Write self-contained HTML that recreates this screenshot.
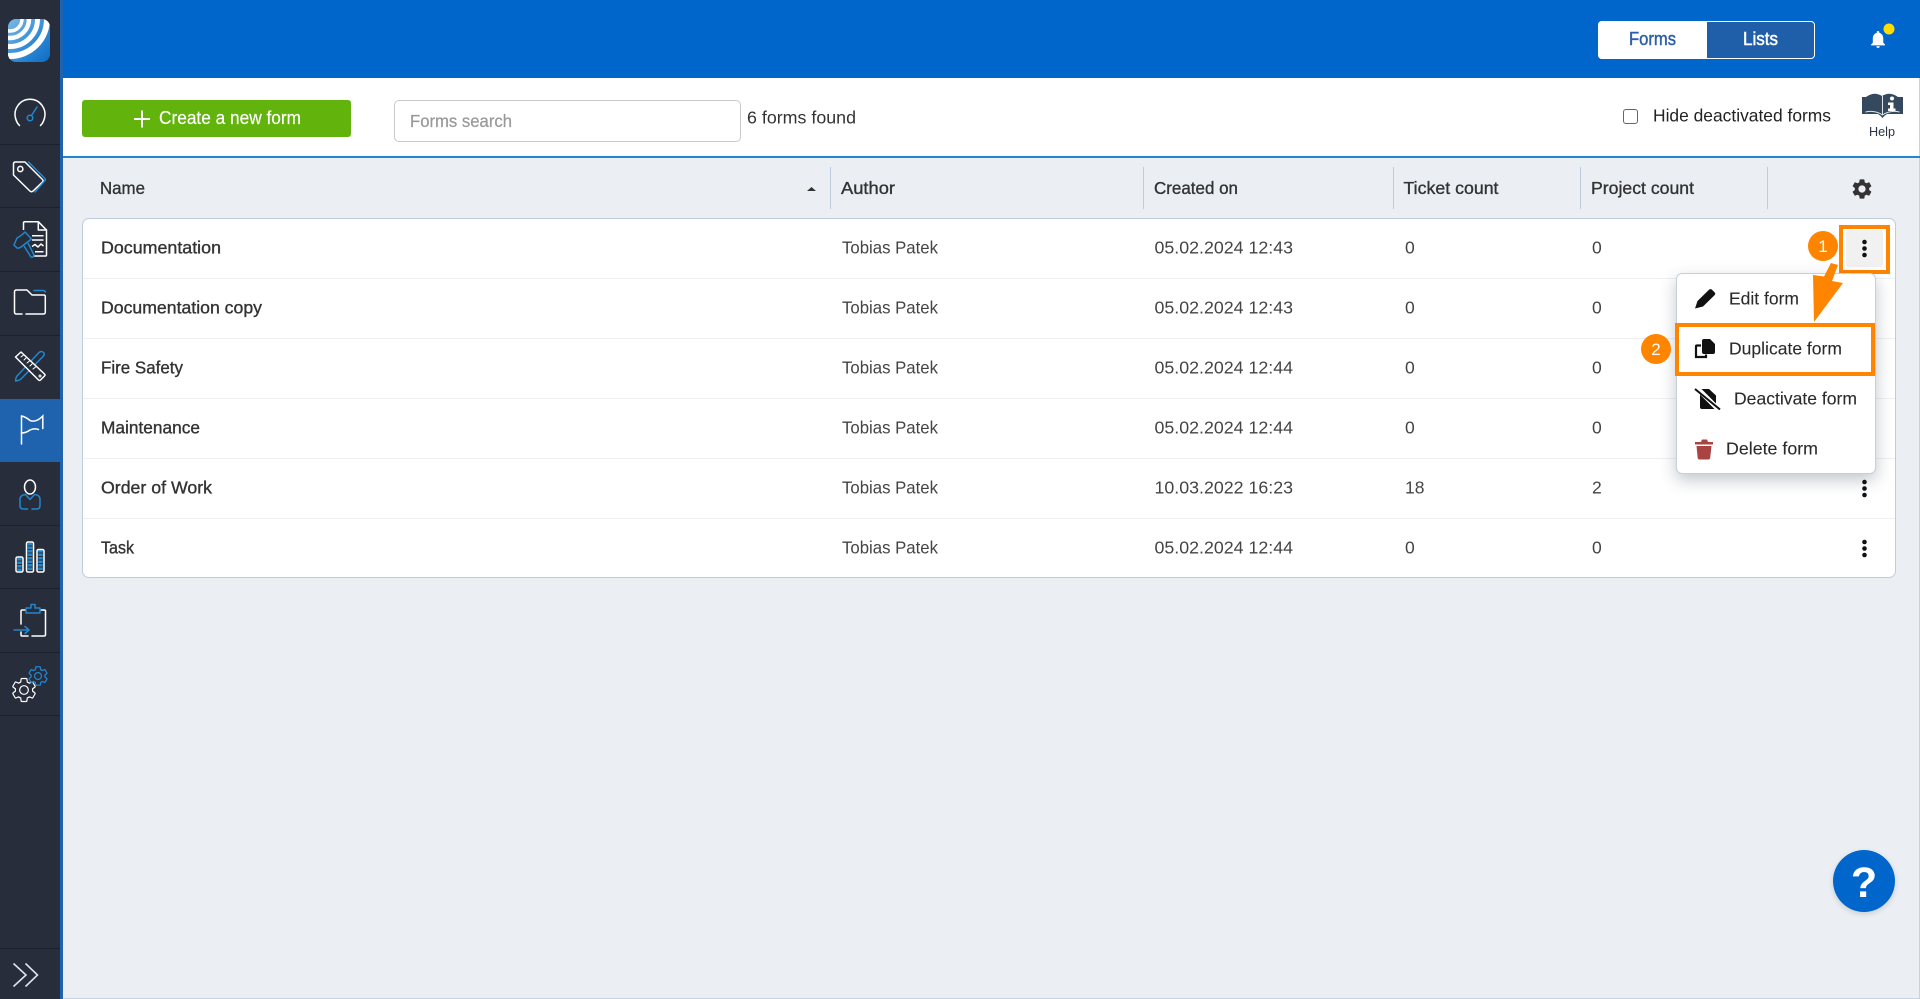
<!DOCTYPE html>
<html lang="en"><head><meta charset="utf-8"><title>Forms</title>
<style>
html,body{margin:0;padding:0;width:1920px;height:999px;overflow:hidden;background:#ebeff4}
div{position:absolute;box-sizing:border-box}
svg{position:absolute;left:0;top:0}
text{font-family:"Liberation Sans",sans-serif;font-size:17.5px;fill:#333}
.b{stroke:#333;stroke-width:.35}
.r{fill:#444}
.m{fill:#2b2b2b;stroke:#2b2b2b;stroke-width:.1}
</style></head><body>
<div style="left:0;top:0;width:60px;height:999px;background:#272d3a"></div>
<div style="left:0;top:399px;width:60px;height:63px;background:#1f62ae"></div>
<div style="left:60px;top:0;width:3px;height:999px;background:#1f62ae"></div>
<div style="left:63px;top:0;width:1857px;height:78px;background:#0066cc"></div>
<div style="left:63px;top:78px;width:1857px;height:78px;background:#fff;border-right:1px solid #c8d3df"></div>
<div style="left:63px;top:156px;width:1857px;height:2px;background:#2187cf"></div>
<div style="left:63px;top:998px;width:1857px;height:1px;background:#c8d3df"></div>
<div style="left:1919px;top:158px;width:1px;height:841px;background:#c8d3df"></div>

<div style="left:82px;top:100px;width:269px;height:37px;background:#62b40c;border-radius:3px"></div>
<div style="left:394px;top:100px;width:347px;height:42px;background:#fff;border:1px solid #c9c9c9;border-radius:5px"></div>
<div style="left:1598px;top:21px;width:217px;height:38px;background:#1f5faa;border:1.5px solid #fff;border-radius:4px"></div>
<div style="left:1598px;top:21px;width:109px;height:38px;background:#fff;border-radius:4px 0 0 4px"></div>
<div style="left:1623px;top:109px;width:15px;height:15px;background:#fff;border:1.5px solid #666;border-radius:3px"></div>

<div style="left:81.5px;top:218px;width:1814.5px;height:360px;background:#fff;border:1px solid #bfccdc;border-radius:7px"></div>
<div style="left:83px;top:278px;width:1812px;height:1px;background:#eef0f3"></div>
<div style="left:83px;top:338px;width:1812px;height:1px;background:#eef0f3"></div>
<div style="left:83px;top:398px;width:1812px;height:1px;background:#eef0f3"></div>
<div style="left:83px;top:458px;width:1812px;height:1px;background:#eef0f3"></div>
<div style="left:83px;top:518px;width:1812px;height:1px;background:#eef0f3"></div>
<div style="left:830px;top:167px;width:1px;height:42px;background:#bfccdc"></div>
<div style="left:1143px;top:167px;width:1px;height:42px;background:#bfccdc"></div>
<div style="left:1393px;top:167px;width:1px;height:42px;background:#bfccdc"></div>
<div style="left:1580px;top:167px;width:1px;height:42px;background:#bfccdc"></div>
<div style="left:1767px;top:167px;width:1px;height:42px;background:#bfccdc"></div>

<div style="left:1846px;top:230px;width:37px;height:37px;background:#f1f1f1;border-radius:3px"></div>
<div style="left:1839px;top:225px;width:51px;height:49px;border:4px solid #ff8500"></div>
<div style="left:1676px;top:273px;width:200px;height:201px;background:#fff;border:1px solid #c5d0dd;border-radius:6px;box-shadow:0 6px 16px rgba(40,50,70,.28)"></div>
<div style="left:1675px;top:323px;width:200px;height:53px;border:4px solid #ff8500"></div>
<div style="left:1833px;top:850px;width:62px;height:62px;border-radius:50%;background:#0066cc;box-shadow:0 2px 6px rgba(0,0,0,.15)"></div>

<svg width="1920" height="999" viewBox="0 0 1920 999" xmlns="http://www.w3.org/2000/svg">
<defs>
<clipPath id="lg"><rect x="8" y="19" width="42" height="43" rx="8"/></clipPath>
<linearGradient id="lb" x1="0" y1="0" x2="1" y2="1"><stop offset="0" stop-color="#7fbae6"/><stop offset=".55" stop-color="#2f8bd6"/><stop offset="1" stop-color="#0d6cc4"/></linearGradient>
</defs>
<!-- sidebar separators -->
<path stroke="#1d222c" stroke-width="1" d="M0 144.5H60M0 207.5H60M0 271.5H60M0 335.5H60M0 525.5H60M0 588.5H60M0 652.5H60M0 715.5H60M0 948.5H60"/>
<!-- logo -->
<g clip-path="url(#lg)">
<rect x="8" y="19" width="42" height="43" fill="url(#lb)"/>
<g fill="none" stroke="#fff">
<circle cx="10" cy="19" r="12" stroke-width="3.5"/>
<circle cx="10" cy="19" r="19" stroke-width="4.5"/>
<circle cx="10" cy="19" r="27.5" stroke-width="5"/>
<circle cx="10" cy="19" r="37" stroke-width="6"/>
</g>
</g>
<!-- gauge -->
<g fill="none" stroke-width="1.5" stroke-linecap="round">
<path d="M19.5 125.5l-1.5-1.8M15.6 118.5A15 15 0 1 1 44.4 118.5M40.5 125.5l1.5-1.8" stroke="#fff"/>
<path d="M15.6 118.5Q16.3 121 17.7 123.5M44.4 118.5Q43.7 121 42.3 123.5" stroke="#fff"/>
<circle cx="30" cy="118" r="2.8" stroke="#2187cf"/>
<path d="M31.5 115.5L37 107" stroke="#2187cf"/>
</g>
<!-- tag -->
<g fill="none" stroke-width="1.5" stroke-linejoin="round" stroke-linecap="round">
<path d="M13.5 164q0-2 2-2H25l17.5 17.5q1.3 1.3 0 2.6l-9.5 9q-1.5 1.3-3 0L13.5 175z" stroke="#fff"/>
<circle cx="20.3" cy="169" r="2.6" stroke="#fff"/>
<path d="M28.5 162L45 178.5q.8 1 0 2L35 192" stroke="#2187cf"/>
</g>
<!-- report with hammer -->
<g fill="none" stroke-width="1.5" stroke-linejoin="round">
<path d="M23.5 230v-7q0-1.300 1.300-1.300H38.300L46.500 230V255q0 1-1 1H33" stroke="#fff"/>
<path d="M38.300 222v8H46.500M32 235.700h11.500M32 240h11.500M35 251.700h8.500" stroke="#fff"/>
<path d="M32 246.500l3-2 3 2.500 3-3 2.500 2" stroke="#fff"/>
<path d="M14 245L17 248Q19 248.500 21 247L31.500 239L25 232Q21 236 17 238Z" stroke="#2187cf" fill="#272d3a"/>
<path d="M24 246L31 257Q33 258 34 255L28 243" stroke="#2187cf"/>
</g>
<!-- folder -->
<g fill="none" stroke-width="1.5" stroke-linecap="round" stroke-linejoin="round">
<path d="M22 314h-5.500q-2 0-2-2v-20q0-2 2-2H27l5 5h12q1.300 0 1.300 1.500V312q0 2-2 2H26" stroke="#fff"/>
<path d="M34 290.500h9q2 0 2.500 1.500" stroke="#2187cf"/>
</g>
<!-- ruler & pencil -->
<g fill="none" stroke-width="1.5" stroke-linejoin="round" stroke-linecap="round">
<path d="M43.500 352.500q1.500 1.500 0 3.500L21 379q-1 1-3 1.500l-2.500.5.500-3q.3-1.500 1.500-2.500L39 352.500q2.500-2 4.500 0z" stroke="#2187cf"/>
<path d="M21 352l-5.500 5 23 23q1 1 2 0l4-4q1-1 0-2z" stroke="#fff" fill="#272d3a"/>
<path d="M21 357l2.500-2M24 360l2-2M27 363l2.500-2M30 366l2-2M33 369l2.500-2" stroke="#fff" stroke-width="1"/>
<circle cx="40" cy="376" r="1" stroke="#fff" stroke-width="1"/>
</g>
<!-- flag -->
<g fill="none" stroke="#fff" stroke-width="1.500" stroke-linecap="round">
<path d="M21.500 416v28"/>
<path d="M21.500 416Q26 417 30 420.500Q36 423 42.800 416V428.500"/>
<path d="M38.500 429.500Q34 428 30 430Q26 433 21.500 433"/>
</g>
<!-- person -->
<g fill="none" stroke-width="1.500" stroke-linecap="round" stroke-linejoin="round">
<ellipse cx="30" cy="487" rx="5.500" ry="7" stroke="#fff"/>
<path d="M25.500 494.500Q20 495 20 499.500V505.500Q20 509 23.500 509H27.500M32 509H36.500Q40 509 40 505.500V499.500Q40 495 34.500 494.500L30 499.500L25.500 494.500" stroke="#2187cf"/>
</g>
<!-- bars -->
<g stroke="#2187cf" stroke-width="4.500" fill="none" stroke-dasharray="2.500 1">
<path d="M19.500 558v13M30 543v28M40.500 550v21"/>
</g>
<g fill="none" stroke="#fff" stroke-width="1.500">
<rect x="16" y="557" width="7" height="15" rx="1.500"/>
<rect x="26.500" y="542" width="7" height="30" rx="1.500"/>
<rect x="37" y="549.500" width="7" height="22.500" rx="1.500"/>
</g>
<!-- clipboard -->
<g fill="none" stroke-width="1.500" stroke-linecap="round" stroke-linejoin="round">
<path d="M25 610h-3q-1 0-1 1v13M21 632v3q0 1 1 1h6M32 636h12q1.500 0 1.500-1.500V611q0-1-1-1H41" stroke="#fff"/>
<path d="M26 613v-5h5v-3.500h4v3.500h5v5z" stroke="#2187cf"/>
<path d="M14 630h15M25 626.500l4 3.500-4 3.500" stroke="#2187cf"/>
</g>
<!-- gears -->
<g fill="none" fill-rule="evenodd" stroke-linejoin="round">
<path transform="translate(9.600 675.600) scale(1.200)" stroke="#fff" stroke-width="1" d="M19.140 12.940c.04-.3.06-.61.06-.94 0-.32-.02-.64-.07-.94l2.030-1.580c.18-.14.23-.41.12-.61l-1.920-3.320c-.12-.22-.37-.29-.59-.22l-2.390.96c-.5-.38-1.030-.7-1.620-.94l-.36-2.540c-.04-.24-.24-.41-.48-.41h-3.840c-.24 0-.43.17-.47.41l-.36 2.540c-.59.24-1.130.57-1.620.94l-2.390-.96c-.22-.08-.47 0-.59.22L2.740 8.870c-.12.21-.08.47.12.61l2.030 1.580c-.05.3-.09.63-.09.94s.02.64.07.94l-2.030 1.580c-.18.14-.23.41-.12.61l1.920 3.320c.12.22.37.29.59.22l2.390-.96c.5.38 1.030.7 1.620.94l.36 2.540c.05.24.24.41.48.41h3.840c.24 0 .44-.17.47-.41l.36-2.540c.59-.24 1.130-.56 1.620-.94l2.390.96c.22.08.47 0 .59-.22l1.920-3.320c.12-.22.07-.47-.12-.61l-2.010-1.580zM12 15.600c-1.980 0-3.600-1.620-3.600-3.600s1.620-3.600 3.600-3.600 3.600 1.620 3.600 3.600-1.620 3.600-3.600 3.600z"/>
<path transform="translate(26.500 664.500) scale(.96)" stroke="#2187cf" stroke-width="1.300" d="M19.140 12.940c.04-.3.06-.61.06-.94 0-.32-.02-.64-.07-.94l2.030-1.580c.18-.14.23-.41.12-.61l-1.920-3.320c-.12-.22-.37-.29-.59-.22l-2.390.96c-.5-.38-1.030-.7-1.620-.94l-.36-2.540c-.04-.24-.24-.41-.48-.41h-3.840c-.24 0-.43.17-.47.41l-.36 2.540c-.59.24-1.130.57-1.620.94l-2.390-.96c-.22-.08-.47 0-.59.22L2.740 8.870c-.12.21-.08.47.12.61l2.030 1.580c-.05.3-.09.63-.09.94s.02.64.07.94l-2.030 1.580c-.18.14-.23.41-.12.61l1.920 3.320c.12.22.37.29.59.22l2.390-.96c.5.38 1.030.7 1.620.94l.36 2.540c.05.24.24.41.48.41h3.840c.24 0 .44-.17.47-.41l.36-2.540c.59-.24 1.130-.56 1.620-.94l2.390.96c.22.08.47 0 .59-.22l1.920-3.320c.12-.22.07-.47-.12-.61l-2.010-1.580zM12 15.600c-1.980 0-3.600-1.620-3.600-3.600s1.620-3.600 3.600-3.600 3.600 1.620 3.600 3.600-1.620 3.600-3.600 3.600z"/>
</g>
<!-- chevrons -->
<path d="M13.500 963.500L26 975 13.500 986.500M25.500 963.500L37.500 975 25.500 986.500" fill="none" stroke="#e0e3e8" stroke-width="1.600"/>

<!-- toolbar -->
<path d="M142 110.500v17M134 119h16" stroke="#fff" stroke-width="2" fill="none"/>
<text x="159" y="124" textLength="142" lengthAdjust="spacingAndGlyphs" style="fill:#fff;font-size:18px;stroke:#fff;stroke-width:.15">Create a new form</text>
<text x="410" y="127" textLength="102" lengthAdjust="spacingAndGlyphs" style="fill:#999;stroke:#999;stroke-width:.25">Forms search</text>
<text x="747" y="123.500" textLength="109" lengthAdjust="spacingAndGlyphs" style="fill:#333">6 forms found</text>
<text x="1629" y="45" textLength="47" lengthAdjust="spacingAndGlyphs" style="fill:#2d5ea8;stroke:#2d5ea8;stroke-width:.45;font-size:18px">Forms</text>
<text x="1743" y="45" textLength="35" lengthAdjust="spacingAndGlyphs" style="fill:#fff;stroke:#fff;stroke-width:.45;font-size:18px">Lists</text>
<path transform="translate(1867.600 28.800) scale(.87)" fill="#fff" d="M12 22c1.100 0 2-.9 2-2h-4c0 1.100.9 2 2 2zm6-6v-5c0-3.070-1.630-5.640-4.500-6.320V4c0-.83-.67-1.500-1.500-1.500s-1.500.67-1.500 1.500v.68C7.640 5.360 6 7.920 6 11v5l-2 2v1h16v-1l-2-2z"/>
<circle cx="1889" cy="29" r="5.500" fill="#ffdc00"/>
<text x="1653" y="121.500" textLength="178" lengthAdjust="spacingAndGlyphs" style="fill:#222">Hide deactivated forms</text>
<!-- help book -->
<path fill="#34495e" d="M1862 97H1866Q1874 91 1882 96Q1890 91 1898 97H1903V114H1887Q1884 116 1882.500 118Q1881 116 1878 114H1862Z"/>
<path fill="none" stroke="#dfe4ea" stroke-width="1" d="M1865.500 112Q1875 110 1882.500 115Q1890 110 1899.500 112M1882.500 96V115"/>
<g fill="#fff"><circle cx="1892" cy="98.500" r="2"/><path d="M1888 102.500h5.500v6h2v2.500h-7.500v-2.500h2v-3.500h-2z"/></g>
<text x="1869" y="136" textLength="26" lengthAdjust="spacingAndGlyphs" style="font-size:13px;fill:#2a3340">Help</text>

<!-- table head -->
<text class="b" x="100" y="194" textLength="45" lengthAdjust="spacingAndGlyphs">Name</text>
<text class="b" x="841" y="194" textLength="54" lengthAdjust="spacingAndGlyphs">Author</text>
<text class="b" x="1154" y="194" textLength="84" lengthAdjust="spacingAndGlyphs">Created on</text>
<text class="b" x="1403.500" y="194" textLength="95" lengthAdjust="spacingAndGlyphs">Ticket count</text>
<text class="b" x="1591" y="194" textLength="103" lengthAdjust="spacingAndGlyphs">Project count</text>
<path d="M807 191l4.500-4 4.500 4z" fill="#333"/>
<path transform="translate(1850 177)" fill="#333" d="M19.140 12.940c.04-.3.06-.61.06-.94 0-.32-.02-.64-.07-.94l2.030-1.580c.18-.14.23-.41.12-.61l-1.920-3.320c-.12-.22-.37-.29-.59-.22l-2.390.96c-.5-.38-1.030-.7-1.620-.94l-.36-2.540c-.04-.24-.24-.41-.48-.41h-3.840c-.24 0-.43.17-.47.41l-.36 2.540c-.59.24-1.130.57-1.620.94l-2.390-.96c-.22-.08-.47 0-.59.22L2.740 8.870c-.12.21-.08.47.12.61l2.030 1.580c-.05.3-.09.63-.09.94s.02.64.07.94l-2.030 1.580c-.18.14-.23.41-.12.61l1.920 3.320c.12.22.37.29.59.22l2.390-.96c.5.38 1.030.7 1.620.94l.36 2.540c.05.24.24.41.48.41h3.840c.24 0 .44-.17.47-.41l.36-2.540c.59-.24 1.130-.56 1.620-.94l2.390.96c.22.08.47 0 .59-.22l1.920-3.320c.12-.22.07-.47-.12-.61l-2.010-1.580zM12 15.600c-1.980 0-3.600-1.620-3.600-3.600s1.620-3.600 3.600-3.600 3.600 1.620 3.600 3.600-1.620 3.600-3.600 3.600z"/>

<!-- rows -->
<text class="b" x="101" y="253.500" textLength="120" lengthAdjust="spacingAndGlyphs">Documentation</text>
<text class="b" x="101" y="313.500" textLength="161" lengthAdjust="spacingAndGlyphs">Documentation copy</text>
<text class="b" x="101" y="373.500" textLength="82" lengthAdjust="spacingAndGlyphs">Fire Safety</text>
<text class="b" x="101" y="433.500" textLength="99" lengthAdjust="spacingAndGlyphs">Maintenance</text>
<text class="b" x="101" y="493.500" textLength="111" lengthAdjust="spacingAndGlyphs">Order of Work</text>
<text class="b" x="101" y="553.500" textLength="33" lengthAdjust="spacingAndGlyphs">Task</text>

<text class="r" x="842" y="253.500" textLength="96" lengthAdjust="spacingAndGlyphs">Tobias Patek</text>
<text class="r" x="842" y="313.500" textLength="96" lengthAdjust="spacingAndGlyphs">Tobias Patek</text>
<text class="r" x="842" y="373.500" textLength="96" lengthAdjust="spacingAndGlyphs">Tobias Patek</text>
<text class="r" x="842" y="433.500" textLength="96" lengthAdjust="spacingAndGlyphs">Tobias Patek</text>
<text class="r" x="842" y="493.500" textLength="96" lengthAdjust="spacingAndGlyphs">Tobias Patek</text>
<text class="r" x="842" y="553.500" textLength="96" lengthAdjust="spacingAndGlyphs">Tobias Patek</text>
<text class="r" x="1154.500" y="253.500" textLength="138.500" lengthAdjust="spacingAndGlyphs">05.02.2024 12:43</text>
<text class="r" x="1154.500" y="313.500" textLength="138.500" lengthAdjust="spacingAndGlyphs">05.02.2024 12:43</text>
<text class="r" x="1154.500" y="373.500" textLength="138.500" lengthAdjust="spacingAndGlyphs">05.02.2024 12:44</text>
<text class="r" x="1154.500" y="433.500" textLength="138.500" lengthAdjust="spacingAndGlyphs">05.02.2024 12:44</text>
<text class="r" x="1154.500" y="493.500" textLength="138.500" lengthAdjust="spacingAndGlyphs">10.03.2022 16:23</text>
<text class="r" x="1154.500" y="553.500" textLength="138.500" lengthAdjust="spacingAndGlyphs">05.02.2024 12:44</text>
<text class="r" x="1405" y="253.500">0</text>
<text class="r" x="1405" y="313.500">0</text>
<text class="r" x="1405" y="373.500">0</text>
<text class="r" x="1405" y="433.500">0</text>
<text class="r" x="1405" y="493.500">18</text>
<text class="r" x="1405" y="553.500">0</text>
<text class="r" x="1592" y="253.500">0</text>
<text class="r" x="1592" y="313.500">0</text>
<text class="r" x="1592" y="373.500">0</text>
<text class="r" x="1592" y="433.500">0</text>
<text class="r" x="1592" y="493.500">2</text>
<text class="r" x="1592" y="553.500">0</text>

<!-- kebabs -->
<g fill="#111">
<circle cx="1864.500" cy="242" r="2.300"/><circle cx="1864.500" cy="248.500" r="2.300"/><circle cx="1864.500" cy="255" r="2.300"/>
<circle cx="1864.500" cy="482" r="2.300"/><circle cx="1864.500" cy="488.500" r="2.300"/><circle cx="1864.500" cy="495" r="2.300"/>
<circle cx="1864.500" cy="542" r="2.300"/><circle cx="1864.500" cy="548.500" r="2.300"/><circle cx="1864.500" cy="555" r="2.300"/>
</g>

<!-- menu items -->
<text class="m" x="1729" y="304.500" textLength="70" lengthAdjust="spacingAndGlyphs">Edit form</text>
<text class="m" x="1729" y="354.500" textLength="113" lengthAdjust="spacingAndGlyphs">Duplicate form</text>
<text class="m" x="1734" y="404.500" textLength="123" lengthAdjust="spacingAndGlyphs">Deactivate form</text>
<text class="m" x="1726" y="454.500" textLength="92" lengthAdjust="spacingAndGlyphs">Delete form</text>
<path fill="#111" d="M1695 308.500L1697.500 301L1709 289.800Q1710.500 288.500 1712 289.800L1714.500 292.300Q1716 293.800 1714.500 295.300L1703 306.500Z"/>
<path fill="none" stroke="#111" stroke-width="2.200" d="M1701 345.500h-4q-1 0-1 1V357h10v-2.500"/>
<path fill="#111" d="M1702 341q0-2 2-2h6l5 5v8q0 2-2 2h-9q-2 0-2-2z"/>
<path fill="#111" d="M1700 391q0-2 2-2h7l7 6.500V407q0 2-2 2h-12q-2 0-2-2z"/>
<path d="M1696.500 387.500L1719 410" stroke="#fff" stroke-width="5"/>
<path d="M1695 389L1720 409.500" stroke="#111" stroke-width="2"/>
<path fill="#a94442" d="M1695 442h6l1-2.500h5l1 2.500h5v2.500h-18zM1696.500 446h15l-1.300 12q-.2 1.500-2 1.500h-8.500q-1.800 0-2-1.500z"/>

<!-- annotations -->
<path fill="#ff8500" d="M1831 263l7 2-6 16 11 2-29 39-1-47 11 1.500z"/>
<circle cx="1823" cy="246" r="15" fill="#ff8500"/>
<text x="1823" y="252" text-anchor="middle" style="fill:#fff;font-size:17px">1</text>
<circle cx="1656" cy="349" r="15" fill="#ff8500"/>
<text x="1656" y="355" text-anchor="middle" style="fill:#fff;font-size:17px">2</text>

<text x="1864" y="897" text-anchor="middle" style="fill:#fff;font-size:43px;font-weight:700">?</text>
</svg>
</body></html>
